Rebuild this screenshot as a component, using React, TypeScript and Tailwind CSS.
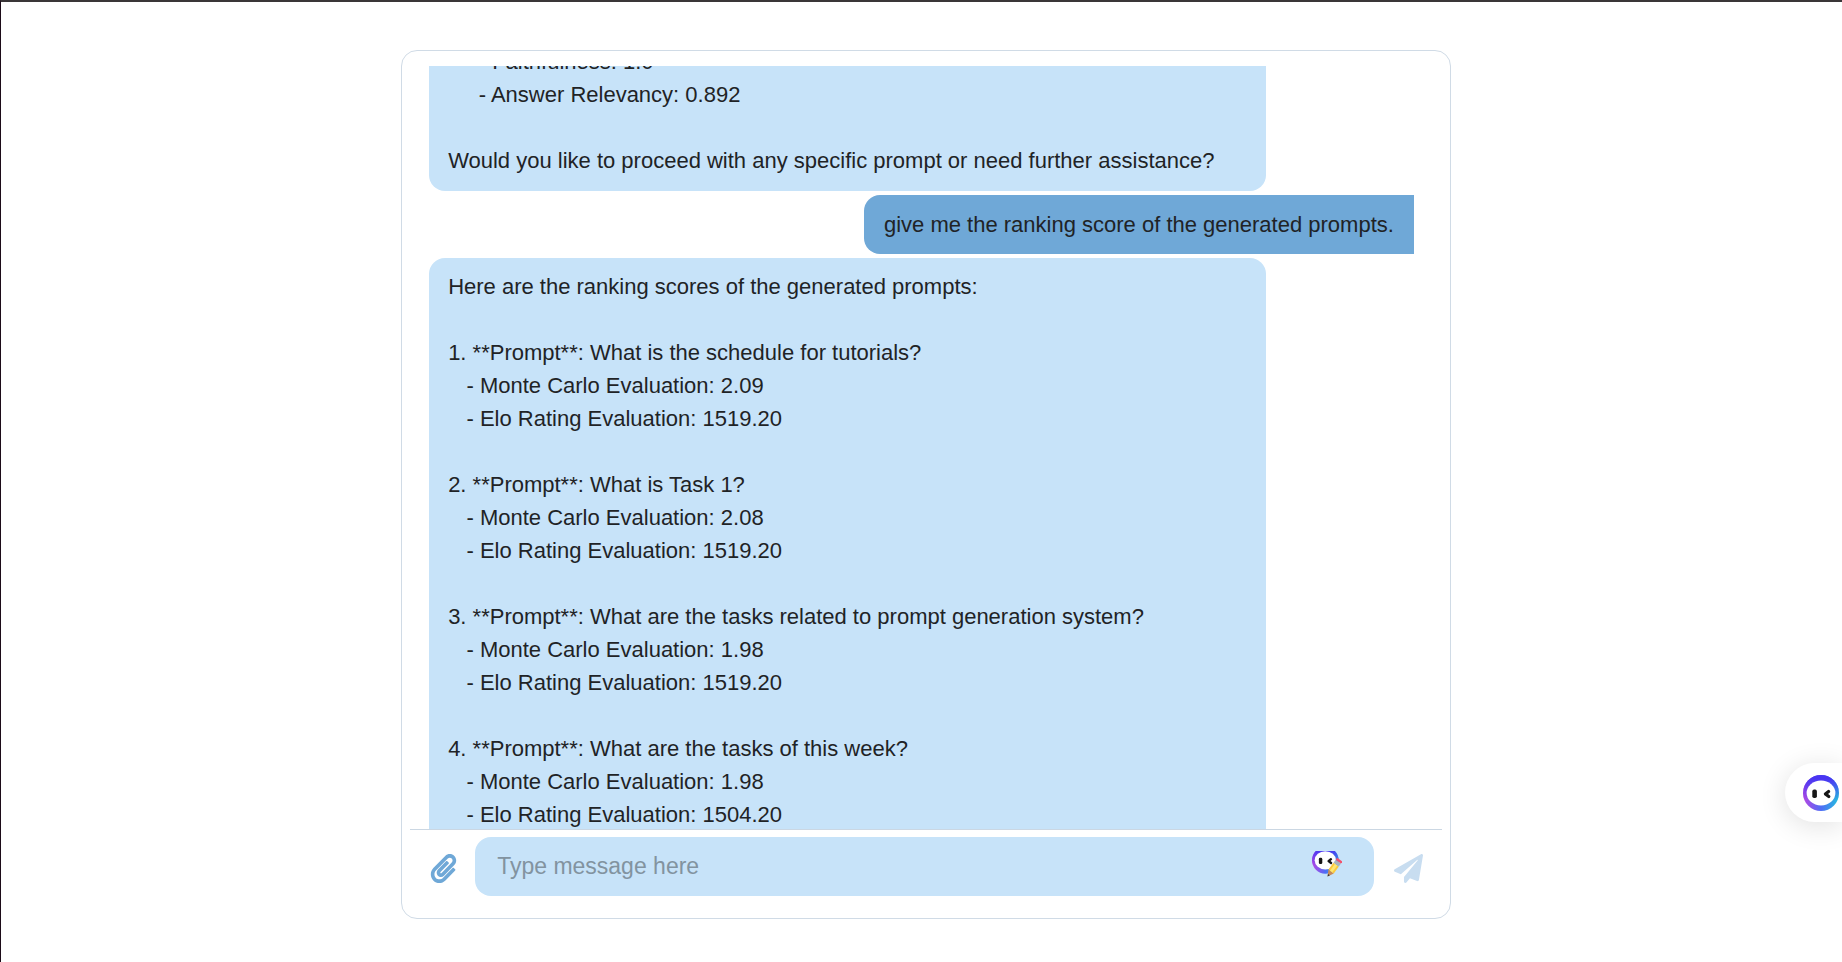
import { useId, useLayoutEffect, useRef, useState } from 'react';
import { FaPaperclip, FaPaperPlane } from 'react-icons/fa';

type Message = { from: 'bot' | 'user'; text: string };

const messages: Message[] = [
  {
    from: 'bot',
    text: `     - Faithfulness: 1.0
     - Answer Relevancy: 0.892

Would you like to proceed with any specific prompt or need further assistance?`,
  },
  { from: 'user', text: 'give me the ranking score of the generated prompts.' },
  {
    from: 'bot',
    text: `Here are the ranking scores of the generated prompts:

1. **Prompt**: What is the schedule for tutorials?
   - Monte Carlo Evaluation: 2.09
   - Elo Rating Evaluation: 1519.20

2. **Prompt**: What is Task 1?
   - Monte Carlo Evaluation: 2.08
   - Elo Rating Evaluation: 1519.20

3. **Prompt**: What are the tasks related to prompt generation system?
   - Monte Carlo Evaluation: 1.98
   - Elo Rating Evaluation: 1519.20

4. **Prompt**: What are the tasks of this week?
   - Monte Carlo Evaluation: 1.98
   - Elo Rating Evaluation: 1504.20`,
  },
];

function Face({ className, pencil = false }: { className: string; pencil?: boolean }) {
  const id = useId();
  return (
    <svg viewBox={pencil ? '0 0 30 26' : '0 0 36 36'} className={className} aria-hidden="true">
      <defs>
        <linearGradient id={id} x1="0" y1="0.7" x2="1" y2="0.7">
          <stop offset="0" stopColor="#b845e2" />
          <stop offset="0.5" stopColor="#4f6cf5" />
          <stop offset="1" stopColor="#22c0dd" />
        </linearGradient>
        <linearGradient id={id + 't'} x1="0" y1="0" x2="0" y2="1">
          <stop offset="0.1" stopColor="#4a35f2" />
          <stop offset="0.7" stopColor="#4a35f2" stopOpacity="0" />
        </linearGradient>
      </defs>
      <g transform={pencil ? 'translate(0 -4) scale(0.74)' : undefined}>
        <circle cx="18" cy="18" r="18" fill={`url(#${id})`} />
        <circle cx="18" cy="18" r="18" fill={`url(#${id}t)`} />
        <ellipse cx="18" cy="18" rx="14.4" ry="12.4" fill="#fff" />
        <rect x="9.3" y="14.6" width="4.6" height="8.4" rx="1.8" fill="#161616" />
        <path d="M25.6 16.4l-3.2 2.6 3.4 2.6" fill="none" stroke="#161616" strokeWidth="3.2" strokeLinecap="round" strokeLinejoin="round" />
      </g>
      {pencil && (
        <g transform="translate(15.6 25.4) rotate(36)">
          <path d="M0 0l-3.3-6h6.6z" fill="#c98a58" />
          <path d="M0 0l-1.2-2.2h2.4z" fill="#333" />
          <path d="M-3.3-6h6.6v-8.6h-6.6z" fill="#fbc93d" />
          <path d="M-1.4-6h2.8v-8.6h-2.8z" fill="#fde774" />
          <path d="M-3.3-14.6h6.6v-3.6h-6.6z" fill="#a9b4c0" />
          <path d="M-3.3-18.2h6.6v-2.6h-6.6z" fill="#f4516c" />
        </g>
      )}
    </svg>
  );
}

function Bubble({ from, text }: Message) {
  return from === 'bot' ? (
    <p className="w-[85%] shrink-0 self-start whitespace-pre-wrap rounded-2xl bg-[#c7e3f9] px-[19px] pt-3 pb-3.5">{text}</p>
  ) : (
    <p className="shrink-0 self-end whitespace-pre-wrap rounded-l-2xl bg-[#6fa8d7] px-5 py-[13px]">{text}</p>
  );
}

export default function App() {
  const history = useRef<HTMLDivElement>(null);
  const [draft, setDraft] = useState('');

  useLayoutEffect(() => {
    if (history.current) history.current.scrollTop = 33;
  }, []);

  return (
    <div className="flex h-screen flex-col overflow-hidden border-l border-t-2 border-l-[#1c0b18] border-t-[#3a3638] bg-white pt-12 pb-[43px] pl-[9px] font-['Liberation_Sans',Arial,sans-serif] text-[22px] leading-[33px] text-[#212529]">
      <main className="mx-auto flex min-h-0 w-[57.3%] min-w-80 flex-1 flex-col rounded-2xl border border-[#d0dbe6] px-2 pt-[15px] pb-[22px]">
        <div
          ref={history}
          aria-label="Conversation"
          className="flex min-h-0 flex-1 flex-col gap-1 overflow-y-auto pl-[19px] pr-7 text-[#1f2326] [scrollbar-width:none]"
        >
          {messages.map((message, index) => (
            <Bubble key={index} {...message} />
          ))}
        </div>
        <form className="flex items-center border-t border-[#cbd7e3] pt-[7px] pl-[15px] pr-[17px]" onSubmit={(e) => e.preventDefault()}>
          <button type="button" aria-label="Attach file" className="flex w-9 justify-center pt-1 text-[#6fa8d7]">
            <FaPaperclip className="size-[29px]" />
          </button>
          <div className="ml-3.5 flex h-[59px] min-w-0 flex-1 items-center rounded-2xl bg-[#c7e3f9] pl-[22px] pr-8">
            <input
              aria-label="Message"
              placeholder="Type message here"
              value={draft}
              onChange={(e) => setDraft(e.target.value)}
              className="min-w-0 flex-1 bg-transparent text-[23px] outline-none placeholder:text-[#8293a0]"
            />
            <button type="button" aria-label="Rewrite message" className="self-start pt-3.5">
              <Face pencil className="h-[26px] w-[30px]" />
            </button>
          </div>
          <button type="submit" aria-label="Send" className="ml-[19px] flex w-8 justify-center pt-1 text-[#c8ddf0]">
            <FaPaperPlane className="size-[29px]" />
          </button>
        </form>
      </main>
      <button
        type="button"
        aria-label="Open assistant"
        className="absolute right-0 bottom-[140px] flex h-[59px] w-[57px] items-center rounded-l-full bg-white pl-[18px] shadow-[0_4px_28px_rgba(0,0,0,0.12)]"
      >
        <Face className="size-9 shrink-0" />
      </button>
    </div>
  );
}
